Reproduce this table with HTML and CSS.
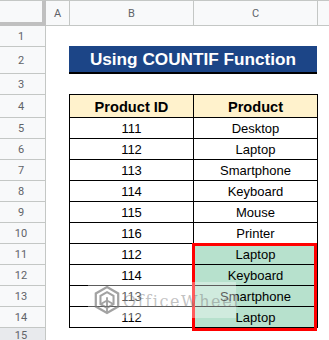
FILE: index.html
```html
<!DOCTYPE html>
<html>
<head>
<meta charset="utf-8">
<link rel="stylesheet" href="styles.css">
</head>
<body>
<div class="sheet">
  <div class="corner"></div>
  <div class="colhdr">A</div>
  <div class="colhdr">B</div>
  <div class="colhdr">C</div>
  <div class="colhdr last"></div>

  <div class="rowhdr">1</div><div class="blank"></div><div class="blank"></div><div class="blank"></div><div class="blank"></div>
  <div class="rowhdr">2</div><div class="blank"></div><div class="title">Using COUNTIF Function</div><div class="blank"></div>
  <div class="rowhdr">3</div><div class="blank"></div><div class="blank"></div><div class="blank"></div><div class="blank"></div>
  <div class="rowhdr">4</div><div class="blank"></div><div class="th first">Product ID</div><div class="th">Product</div><div class="blank"></div>
  <div class="rowhdr">5</div><div class="blank"></div><div class="td first">111</div><div class="td">Desktop</div><div class="blank"></div>
  <div class="rowhdr">6</div><div class="blank"></div><div class="td first">112</div><div class="td">Laptop</div><div class="blank"></div>
  <div class="rowhdr">7</div><div class="blank"></div><div class="td first">113</div><div class="td">Smartphone</div><div class="blank"></div>
  <div class="rowhdr">8</div><div class="blank"></div><div class="td first">114</div><div class="td">Keyboard</div><div class="blank"></div>
  <div class="rowhdr">9</div><div class="blank"></div><div class="td first">115</div><div class="td">Mouse</div><div class="blank"></div>
  <div class="rowhdr">10</div><div class="blank"></div><div class="td first">116</div><div class="td">Printer</div><div class="blank"></div>
  <div class="rowhdr">11</div><div class="blank"></div><div class="td first">112</div><div class="td hl">Laptop</div><div class="blank"></div>
  <div class="rowhdr">12</div><div class="blank"></div><div class="td first">114</div><div class="td hl">Keyboard</div><div class="blank"></div>
  <div class="rowhdr">13</div><div class="blank"></div><div class="td first">113</div><div class="td hl">Smartphone</div><div class="blank"></div>
  <div class="rowhdr">14</div><div class="blank"></div><div class="td first">112</div><div class="td hl">Laptop</div><div class="blank"></div>
  <div class="rowhdr active">15</div>

  <div class="selection"></div>

  <div class="watermark">
    <svg class="wm-logo" width="28" height="30" viewBox="0 0 30 32">
      <path d="M15 2 L27 9 L27 23 L15 30 L3 23 L3 9 Z" fill="none" stroke="#8c8c8c" stroke-width="2.4"/>
      <path d="M15 7.5 L22 11.5 L22 20.5 L15 24.5 L8 20.5 L8 11.5 Z" fill="none" stroke="#8c8c8c" stroke-width="2.2"/>
      <path d="M15 13 L15 30 M8 20.5 L15 16.5 L22 20.5" fill="none" stroke="#8c8c8c" stroke-width="2"/>
    </svg>
    <span class="wm-text">OfficeWheel</span>
  </div>
</div>
</body>
</html>
```
FILE: styles.css
```css
* { box-sizing: border-box; }
html, body { margin: 0; padding: 0; background: #ffffff; }
body { width: 329px; height: 340px; overflow: hidden; font-family: "Liberation Sans", Arial, sans-serif; }

.sheet {
  position: relative;
  display: grid;
  grid-template-columns: 46px 24px 124px 124px 11px;
  grid-template-rows: 26px 21px 27px 21px 23px repeat(10, 21px) 13px;
  width: 329px;
  height: 340px;
  overflow: hidden;
}

.corner {
  background: #f8f9fa;
  border-top: 1px solid #c4c7c5;
  border-right: 4px solid #c0c0c0;
  border-bottom: 4px solid #c0c0c0;
}

.colhdr {
  background: #f8f9fa;
  border-top: 1px solid #c4c7c5;
  border-right: 1px solid #c4c7c5;
  border-bottom: 1px solid #c4c7c5;
  display: flex;
  align-items: center;
  justify-content: center;
  color: #5f6368;
  font-family: Roboto, "Liberation Sans", Arial, sans-serif;
  font-size: 11px;
  padding-top: 1px;
}
.colhdr.last { border-right: none; }

.rowhdr {
  grid-column: 1;
  background: #f8f9fa;
  border-right: 1px solid #c4c7c5;
  border-bottom: 1px solid #c4c7c5;
  display: flex;
  align-items: center;
  justify-content: center;
  padding-right: 3px;
  color: #5f6368;
  font-family: Roboto, "Liberation Sans", Arial, sans-serif;
  font-size: 11px;
}
.rowhdr.active { background: #e8eaed; border-bottom: none; align-items: flex-start; padding-top: 1px; }

.title {
  grid-column: 3 / span 2;
  margin-top: -1px;
  margin-left: -1px;
  margin-right: 1px;
  background: #1c4587;
  border-bottom: 2px solid #000;
  color: #ffffff;
  font-weight: bold;
  font-size: 17.2px;
  display: flex;
  align-items: center;
  justify-content: center;
  padding-top: 1px;
}

.th, .td {
  border-right: 1px solid #000;
  border-bottom: 1px solid #000;
  display: flex;
  align-items: center;
  justify-content: center;
  color: #000;
}
.th {
  background: #fff2cc;
  font-weight: bold;
  font-size: 14.6px;
  box-shadow: 0 -1px 0 #000;
  padding-top: 1px;
}
.td { font-size: 13px; padding-top: 1px; }
.first { box-shadow: -1px 0 0 #000; }
.th.first { box-shadow: -1px 0 0 #000, 0 -1px 0 #000, -1px -1px 0 #000; }
.hl { background: #b7e1cd; }

.selection {
  position: absolute;
  grid-column: 4 / 5;
  grid-row: 12 / 16;
  top: -1px;
  left: -2px;
  right: 1px;
  bottom: -3px;
  border: 3px solid #ff0000;
  pointer-events: none;
}

.watermark {
  position: absolute;
  left: 88px;
  top: 282px;
  width: 148px;
  height: 36px;
  background: rgba(255, 255, 255, 0.45);
  display: flex;
  align-items: center;
  gap: 2px;
  padding-left: 5px;
  opacity: 0.8;
  overflow: visible;
}
.wm-logo { flex: 0 0 auto; }
.wm-text {
  flex: 0 0 auto;
  white-space: nowrap;
  font-family: "DejaVu Serif", "Liberation Serif", serif;
  font-size: 16px;
  letter-spacing: 1.6px;
  color: rgba(130, 130, 130, 0.6);
  margin-top: 3px;
}
```
